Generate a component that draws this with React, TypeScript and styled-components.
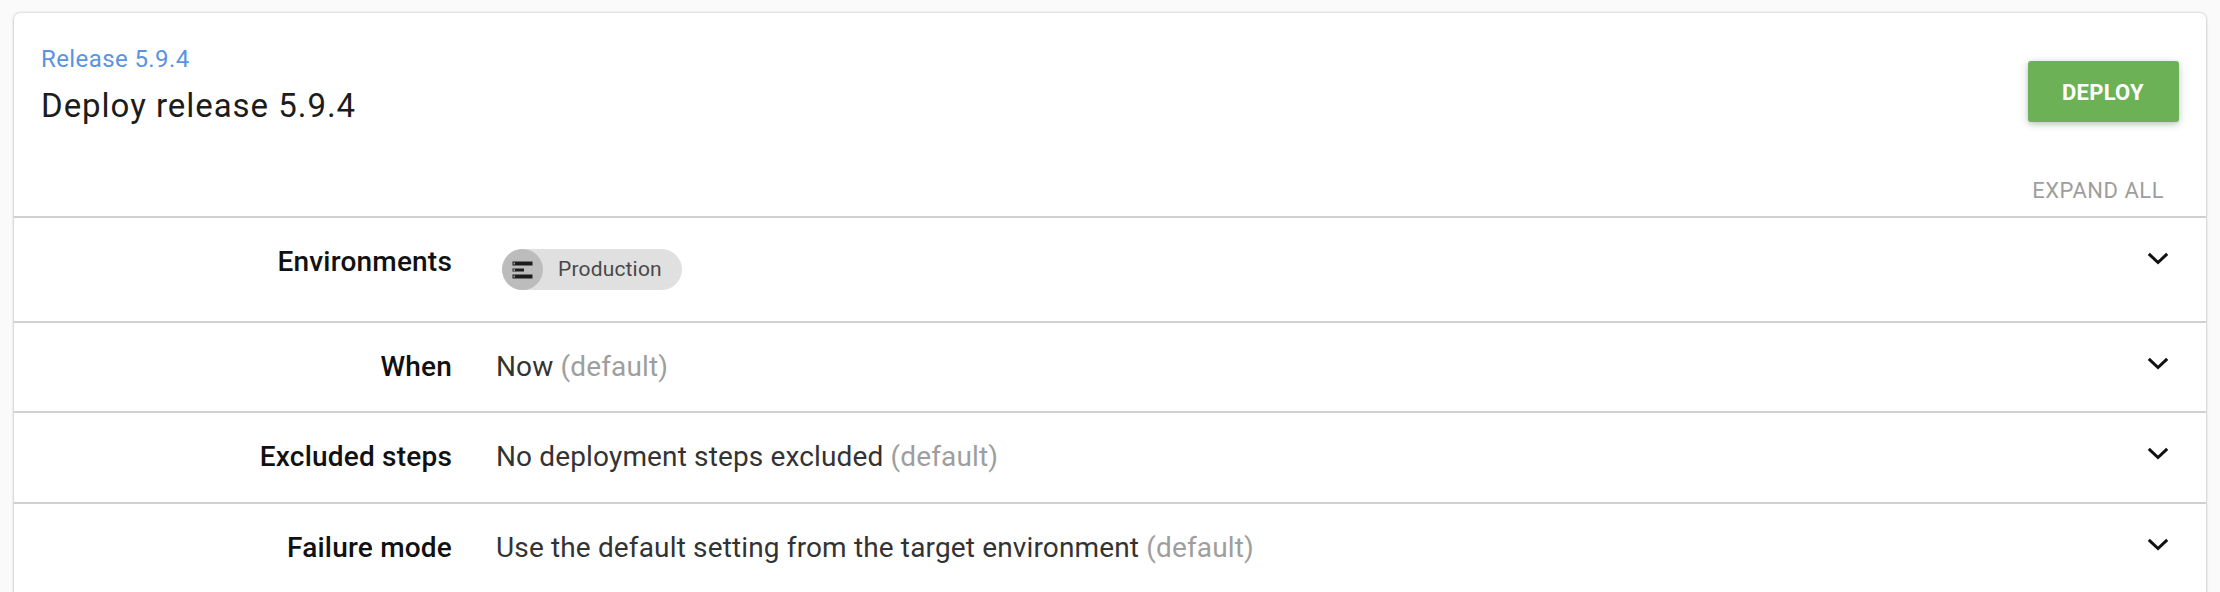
import React from 'react';
import styled, { createGlobalStyle } from 'styled-components';

const GlobalStyle = createGlobalStyle`
  * { box-sizing: border-box; }
  html, body { height: 592px; overflow: hidden; }
  body {
    margin: 0;
    background: #fafafa;
    color: #111;
    font-family: Roboto, "Liberation Sans", sans-serif;
  }
`;

const Page = styled.main`
  height: 592px;
  padding: 13px 14px 0 14px;
  overflow: hidden;
`;

const Card = styled.section`
  height: 640px;
  background: #fff;
  border-radius: 6px;
  box-shadow: 0 0 2px 1px rgba(0, 0, 0, 0.12), 0 2px 3px rgba(0, 0, 0, 0.12);
`;

const Header = styled.header`
  display: flex;
  justify-content: space-between;
  align-items: flex-start;
  height: 141px;
  padding: 32px 27px 0 27px;
`;

const ReleaseLink = styled.a`
  display: block;
  height: 28px;
  font-size: 24px;
  line-height: 28px;
  letter-spacing: 0.4px;
  color: #5b93e2;
  text-decoration: none;
`;

const Title = styled.h1`
  margin: 13px 0 0;
  font-size: 33px;
  font-weight: 400;
  line-height: 40px;
  letter-spacing: 0.97px;
  color: #1c1c1c;
`;

const DeployButton = styled.button`
  width: 151px;
  height: 61px;
  margin-top: 16px;
  padding: 2px 1px 0 0;
  border: 0;
  border-radius: 3px;
  background: #6cb155;
  box-shadow: 0 2px 9px rgba(0, 0, 0, 0.2), 0 2px 4px rgba(0, 0, 0, 0.08);
  color: #fff;
  font: 700 22px/26px Roboto, sans-serif;
  letter-spacing: 0.25px;
`;

const ExpandBar = styled.div`
  display: flex;
  justify-content: flex-end;
  height: 62px;
  padding: 24px 42px 0 0;
`;

const ExpandAll = styled.button`
  height: 26px;
  padding: 0;
  border: 0;
  background: none;
  color: #9e9e9e;
  font: 400 22px/26px Roboto, sans-serif;
  letter-spacing: 0.5px;
`;

const Row = styled.div<{ $height: number }>`
  display: grid;
  grid-template-columns: 438px 1fr 81px;
  column-gap: 44px;
  height: ${({ $height }) => $height}px;
  padding-top: 27px;
  border-top: 2px solid #d0d0d0;
`;

const Label = styled.div`
  font-size: 28px;
  font-weight: 500;
  line-height: 33px;
  letter-spacing: 0.2px;
  text-align: right;
`;

const Value = styled.div`
  font-size: 28px;
  font-weight: 400;
  line-height: 33px;
  letter-spacing: 0.145px;
  color: #333;
`;

const Default = styled.span`
  color: #9e9e9e;
`;

const Chip = styled.div`
  display: flex;
  align-items: center;
  width: 180px;
  height: 41px;
  margin: 4px 0 0 6px;
  border-radius: 21px;
  background: #e0e0e0;
  color: #484848;
  font-size: 21px;
  letter-spacing: 0.17px;
`;

const ChipIcon = styled.span`
  display: flex;
  align-items: center;
  justify-content: center;
  width: 41px;
  height: 41px;
  margin-right: 15px;
  border-radius: 50%;
  background: #bcbcbc;
`;

const Chevron = styled.svg`
  display: block;
  margin: 7px 0 0 22px;
`;

const EnvironmentIcon = () => (
  <svg width="21" height="18" viewBox="0 0 21 18">
    <path d="M.5 0.500h20v4H.5zM.5 7.500h11.500v3H.5zM.5 13.500h20v4H.5z" fill="#1c1c1c" />
    <path d="M1.500 1.500h1.500v2h-1.500zM1.500 8h1.500v2h-1.500zM1.500 14.500h1.500v2h-1.500z" fill="#999" />
  </svg>
);

const sections: { label: string; value?: string; height: number }[] = [
  { label: 'Environments', height: 105 },
  { label: 'When', value: 'Now', height: 90 },
  { label: 'Excluded steps', value: 'No deployment steps excluded', height: 91 },
  {
    label: 'Failure mode',
    value: 'Use the default setting from the target environment',
    height: 91,
  },
];

export default function App() {
  return (
    <Page>
      <GlobalStyle />
      <Card>
        <Header>
          <div>
            <ReleaseLink>Release 5.9.4</ReleaseLink>
            <Title>Deploy release 5.9.4</Title>
          </div>
          <DeployButton>DEPLOY</DeployButton>
        </Header>
        <ExpandBar>
          <ExpandAll>EXPAND ALL</ExpandAll>
        </ExpandBar>
        {sections.map(({ label, value, height }) => (
          <Row key={label} $height={height}>
            <Label>{label}</Label>
            <Value>
              {value ? (
                <>
                  {value} <Default>(default)</Default>
                </>
              ) : (
                <Chip>
                  <ChipIcon>
                    <EnvironmentIcon />
                  </ChipIcon>
                  Production
                </Chip>
              )}
            </Value>
            <Chevron width="22" height="14" viewBox="0 0 22 14">
              <path d="M1.800 1.800 11 10.500 20.200 1.800" fill="none" stroke="#111" strokeWidth="3" />
            </Chevron>
          </Row>
        ))}
      </Card>
    </Page>
  );
}
